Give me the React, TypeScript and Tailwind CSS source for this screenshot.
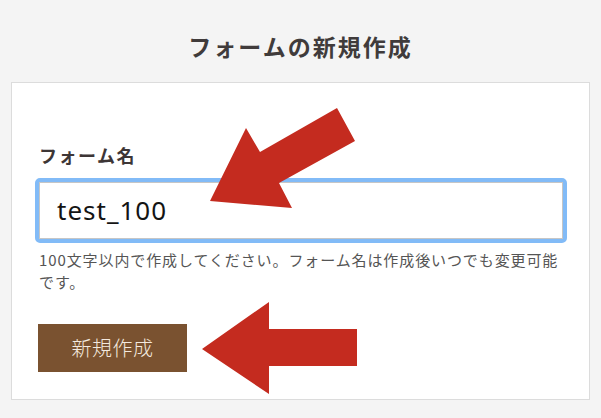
export default function App() {
  const jp = { fontFamily: '"Noto Sans CJK JP", "Noto Sans", sans-serif' };
  return (
    <div className="relative w-[601px] h-[418px] bg-[#f4f4f4] overflow-hidden" style={jp}>
      <div className="pt-[30px]">
        <h1 className="h-[32px] text-center text-[23px] leading-[32px] font-bold tracking-[2px] text-[#403b3b]">
          フォームの新規作成
        </h1>
        <div className="mx-[11px] mt-[20px] bg-white border border-[#dcdcdc] pl-[27px] pr-[26px] pt-[60px] pb-[27px]">
          <div className="text-[18px] leading-[24px] font-bold tracking-[1.5px] text-[#3d3636]">フォーム名</div>
          <div className="-mx-[4px] mt-[11px] rounded-[5px] border-4 border-[#82bbf7]">
            <div className="h-[57px] border border-[#c6c6c6] bg-white flex items-center pl-[17px]">
              <span
                className="text-[26px] tracking-[1px] text-[#141414]"
                style={{ fontFamily: '"Noto Sans", sans-serif' }}
              >
                test_100
              </span>
            </div>
          </div>
          <p className="mt-[6px] text-[15px] leading-[22px] tracking-[0.9px] text-[#555555]">
            100文字以内で作成してください。フォーム名は作成後いつでも変更可能です。
          </p>
          <button className="mt-[31px] ml-[-1px] w-[149px] h-[48px] bg-[#7a5230] text-[#f3e9df] text-[20px] font-light tracking-[0.5px] flex items-center justify-center">
            新規作成
          </button>
        </div>
      </div>
      <svg
        className="absolute inset-0 pointer-events-none"
        width="601"
        height="418"
        viewBox="0 0 601 418"
      >
        <polygon
          points="210,201 246,128 260,152 337,108 355,141 279,183 292,208"
          fill="#c42b1f"
        />
        <polygon
          points="202,349 269,302 269,329 357,329 357,366 269,366 269,394"
          fill="#c42b1f"
        />
      </svg>
    </div>
  );
}
